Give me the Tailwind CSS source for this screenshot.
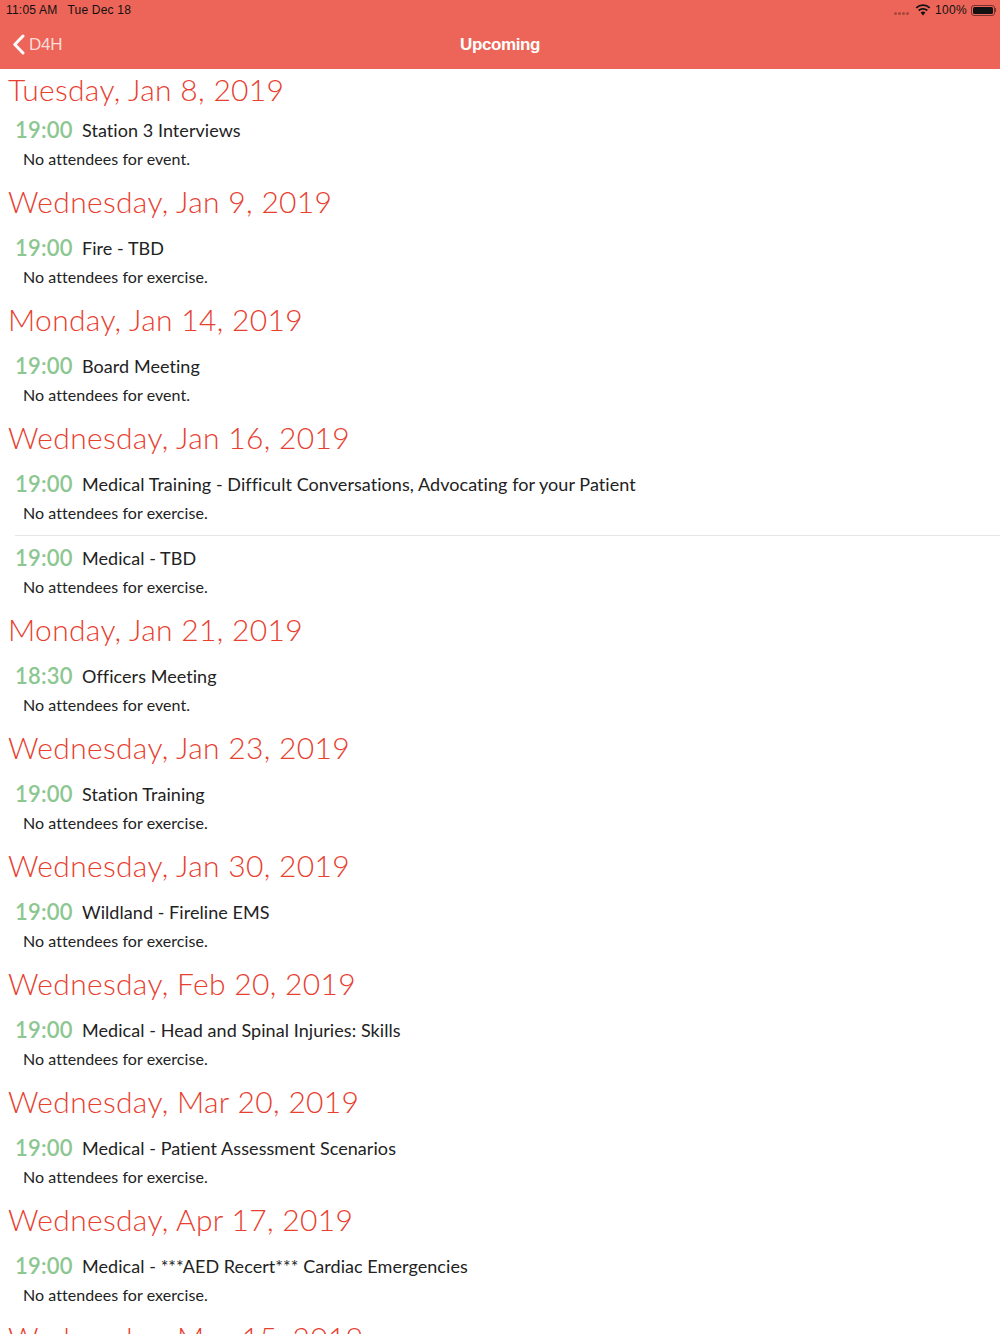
<!DOCTYPE html>
<html><head><meta charset="utf-8"><script src="https://cdn.jsdelivr.net/npm/@tailwindcss/browser@4"></script></head>
<body class="bg-white overflow-hidden">
<div class="w-[1000px] h-[1334px] overflow-hidden font-['Lato',sans-serif]">
<header class="h-[69px] bg-[#ec6558] relative">
  <div class="h-[20px] flex items-center justify-between pl-[6px] pr-[4px] font-['Liberation_Sans',sans-serif] text-[12px] text-[#111] tracking-[0.2px]">
    <div class="flex gap-[10px]"><span>11:05 AM</span><span>Tue Dec 18</span></div>
    <div class="flex items-center gap-[4px]">
      <div class="flex gap-[1px] mr-[2px] mt-[6px]"><i class="w-[3px] h-[3px] rounded-full bg-black/30"></i><i class="w-[3px] h-[3px] rounded-full bg-black/30"></i><i class="w-[3px] h-[3px] rounded-full bg-black/30"></i><i class="w-[3px] h-[3px] rounded-full bg-black/30"></i></div>
      <svg width="16" height="12" viewBox="0 0 16 12"><path d="M8 11.5 5.6 8.6a3.6 3.6 0 0 1 4.8 0Z" fill="#111"/><path d="M3.7 6.5a6.3 6.3 0 0 1 8.6 0M1.3 3.8a10 10 0 0 1 13.4 0" fill="none" stroke="#111" stroke-width="1.8"/></svg>
      <span class="tracking-[0.3px]">100%</span>
      <div class="flex items-center"><div class="w-[24px] h-[11px] rounded-[3px] border border-black/50 p-[1px]"><div class="w-full h-full rounded-[1.5px] bg-[#111]"></div></div><div class="w-[1px] h-[4px] bg-black/50"></div></div>
    </div>
  </div>
  <div class="h-[49px] flex items-center justify-center text-[17px] font-['Liberation_Sans',sans-serif] text-white font-bold relative">
    <span class="tracking-[-0.4px]">Upcoming</span>
    <div class="absolute left-[12px] top-[14px] h-[21px] flex items-center gap-[4px] font-normal">
      <svg width="13" height="21" viewBox="0 0 13 21"><path d="M11 2 2.8 10.5 11 19" fill="none" stroke="#fff" stroke-width="3" stroke-linecap="round" stroke-linejoin="round"/></svg>
      <span class="text-[#f9dcd8] tracking-[-0.2px] leading-[21px]">D4H</span>
    </div>
  </div>
</header>
<main class="text-[#222]">
  <section>
    <h2 class="h-[42px] pl-[8px] leading-[40px] text-[30px] font-light text-[#e8402f] tracking-[0.32px]">Tuesday, Jan 8, 2019</h2>
    <div class="h-[70px] pl-[15px] pt-[5px]">
      <div class="flex items-center h-[28px]"><span class="w-[67px] pb-[2px] text-[22px] font-semibold text-[#8cc791] tracking-[0.2px]">19:00</span><span class="text-[18px] tracking-[0.06px]">Station 3 Interviews</span></div>
      <p class="pl-[8px] mt-[2px] h-[26px] leading-[26px] text-[16px] tracking-[0.06px]">No attendees for event.</p>
    </div>
  </section>
  <section>
    <h2 class="h-[42px] pl-[8px] leading-[40px] text-[30px] font-light text-[#e8402f] tracking-[0.32px]">Wednesday, Jan 9, 2019</h2>
    <div class="h-[76px] pl-[15px] pt-[11px]">
      <div class="flex items-center h-[28px]"><span class="w-[67px] pb-[2px] text-[22px] font-semibold text-[#8cc791] tracking-[0.2px]">19:00</span><span class="text-[18px] tracking-[0.06px]">Fire - TBD</span></div>
      <p class="pl-[8px] mt-[2px] h-[26px] leading-[26px] text-[16px] tracking-[0.06px]">No attendees for exercise.</p>
    </div>
  </section>
  <section>
    <h2 class="h-[42px] pl-[8px] leading-[40px] text-[30px] font-light text-[#e8402f] tracking-[0.32px]">Monday, Jan 14, 2019</h2>
    <div class="h-[76px] pl-[15px] pt-[11px]">
      <div class="flex items-center h-[28px]"><span class="w-[67px] pb-[2px] text-[22px] font-semibold text-[#8cc791] tracking-[0.2px]">19:00</span><span class="text-[18px] tracking-[0.06px]">Board Meeting</span></div>
      <p class="pl-[8px] mt-[2px] h-[26px] leading-[26px] text-[16px] tracking-[0.06px]">No attendees for event.</p>
    </div>
  </section>
  <section>
    <h2 class="h-[42px] pl-[8px] leading-[40px] text-[30px] font-light text-[#e8402f] tracking-[0.32px]">Wednesday, Jan 16, 2019</h2>
    <div class="ml-[15px] h-[77px] pt-[11px] border-b border-[#e6e6e6]">
      <div class="flex items-center h-[28px]"><span class="w-[67px] pb-[2px] text-[22px] font-semibold text-[#8cc791] tracking-[0.2px]">19:00</span><span class="text-[18px] tracking-[0.06px]">Medical Training - Difficult Conversations, Advocating for your Patient</span></div>
      <p class="pl-[8px] mt-[2px] h-[26px] leading-[26px] text-[16px] tracking-[0.06px]">No attendees for exercise.</p>
    </div>
    <div class="h-[73px] pl-[15px] pt-[8px]">
      <div class="flex items-center h-[28px]"><span class="w-[67px] pb-[2px] text-[22px] font-semibold text-[#8cc791] tracking-[0.2px]">19:00</span><span class="text-[18px] tracking-[0.06px]">Medical - TBD</span></div>
      <p class="pl-[8px] mt-[2px] h-[26px] leading-[26px] text-[16px] tracking-[0.06px]">No attendees for exercise.</p>
    </div>
  </section>
  <section>
    <h2 class="h-[42px] pl-[8px] leading-[40px] text-[30px] font-light text-[#e8402f] tracking-[0.32px]">Monday, Jan 21, 2019</h2>
    <div class="h-[76px] pl-[15px] pt-[11px]">
      <div class="flex items-center h-[28px]"><span class="w-[67px] pb-[2px] text-[22px] font-semibold text-[#8cc791] tracking-[0.2px]">18:30</span><span class="text-[18px] tracking-[0.06px]">Officers Meeting</span></div>
      <p class="pl-[8px] mt-[2px] h-[26px] leading-[26px] text-[16px] tracking-[0.06px]">No attendees for event.</p>
    </div>
  </section>
  <section>
    <h2 class="h-[42px] pl-[8px] leading-[40px] text-[30px] font-light text-[#e8402f] tracking-[0.32px]">Wednesday, Jan 23, 2019</h2>
    <div class="h-[76px] pl-[15px] pt-[11px]">
      <div class="flex items-center h-[28px]"><span class="w-[67px] pb-[2px] text-[22px] font-semibold text-[#8cc791] tracking-[0.2px]">19:00</span><span class="text-[18px] tracking-[0.06px]">Station Training</span></div>
      <p class="pl-[8px] mt-[2px] h-[26px] leading-[26px] text-[16px] tracking-[0.06px]">No attendees for exercise.</p>
    </div>
  </section>
  <section>
    <h2 class="h-[42px] pl-[8px] leading-[40px] text-[30px] font-light text-[#e8402f] tracking-[0.32px]">Wednesday, Jan 30, 2019</h2>
    <div class="h-[76px] pl-[15px] pt-[11px]">
      <div class="flex items-center h-[28px]"><span class="w-[67px] pb-[2px] text-[22px] font-semibold text-[#8cc791] tracking-[0.2px]">19:00</span><span class="text-[18px] tracking-[0.06px]">Wildland - Fireline EMS</span></div>
      <p class="pl-[8px] mt-[2px] h-[26px] leading-[26px] text-[16px] tracking-[0.06px]">No attendees for exercise.</p>
    </div>
  </section>
  <section>
    <h2 class="h-[42px] pl-[8px] leading-[40px] text-[30px] font-light text-[#e8402f] tracking-[0.32px]">Wednesday, Feb 20, 2019</h2>
    <div class="h-[76px] pl-[15px] pt-[11px]">
      <div class="flex items-center h-[28px]"><span class="w-[67px] pb-[2px] text-[22px] font-semibold text-[#8cc791] tracking-[0.2px]">19:00</span><span class="text-[18px] tracking-[0.06px]">Medical - Head and Spinal Injuries: Skills</span></div>
      <p class="pl-[8px] mt-[2px] h-[26px] leading-[26px] text-[16px] tracking-[0.06px]">No attendees for exercise.</p>
    </div>
  </section>
  <section>
    <h2 class="h-[42px] pl-[8px] leading-[40px] text-[30px] font-light text-[#e8402f] tracking-[0.32px]">Wednesday, Mar 20, 2019</h2>
    <div class="h-[76px] pl-[15px] pt-[11px]">
      <div class="flex items-center h-[28px]"><span class="w-[67px] pb-[2px] text-[22px] font-semibold text-[#8cc791] tracking-[0.2px]">19:00</span><span class="text-[18px] tracking-[0.06px]">Medical - Patient Assessment Scenarios</span></div>
      <p class="pl-[8px] mt-[2px] h-[26px] leading-[26px] text-[16px] tracking-[0.06px]">No attendees for exercise.</p>
    </div>
  </section>
  <section>
    <h2 class="h-[42px] pl-[8px] leading-[40px] text-[30px] font-light text-[#e8402f] tracking-[0.32px]">Wednesday, Apr 17, 2019</h2>
    <div class="h-[76px] pl-[15px] pt-[11px]">
      <div class="flex items-center h-[28px]"><span class="w-[67px] pb-[2px] text-[22px] font-semibold text-[#8cc791] tracking-[0.2px]">19:00</span><span class="text-[18px] tracking-[0.06px]">Medical - ***AED Recert*** Cardiac Emergencies</span></div>
      <p class="pl-[8px] mt-[2px] h-[26px] leading-[26px] text-[16px] tracking-[0.06px]">No attendees for exercise.</p>
    </div>
  </section>
  <section>
    <h2 class="h-[42px] pl-[8px] leading-[40px] text-[30px] font-light text-[#e8402f] tracking-[0.32px]">Wednesday, May 15, 2019</h2>
  </section>
</main>
</div>
</body></html>
